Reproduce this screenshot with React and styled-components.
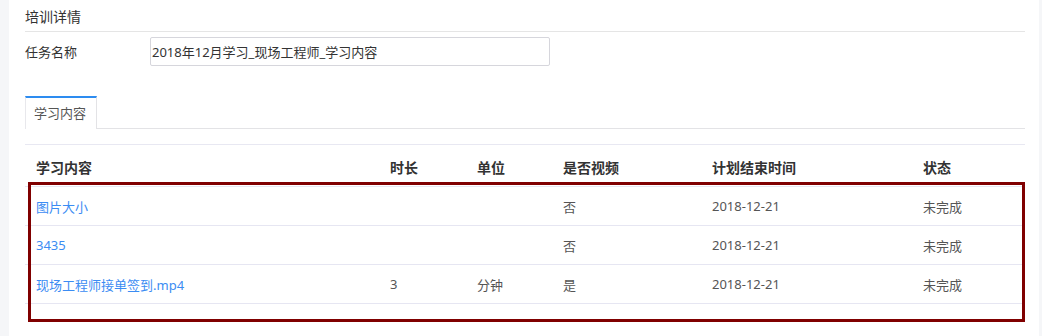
import React from "react";
import styled, { createGlobalStyle } from "styled-components";

const Global = createGlobalStyle`
  html, body { margin: 0; padding: 0; background: #f5f6f8; }
  body { font-family: "Noto Sans", "Noto Sans CJK SC", sans-serif; color: #333; }
  * { box-sizing: border-box; }
`;

const Panel = styled.div`
  margin-left: 9px;
  width: 1030px;
  min-height: 336px;
  background: #fff;
  padding: 0 14px 0 16px;
  position: relative;
`;

const Title = styled.div`
  height: 32px;
  padding-top: 2px;
  line-height: 29px;
  font-size: 14px;
  color: #333;
  border-bottom: 1px solid #e5e5e5;
`;

const FormRow = styled.div`
  display: flex;
  align-items: center;
  margin-top: 5px;
  height: 29px;
`;

const Label = styled.div`
  width: 125px;
  font-size: 13px;
  color: #333;
`;

const Input = styled.div`
  width: 400px;
  height: 29px;
  border: 1px solid #d6d6dc;
  border-radius: 2px;
  padding: 0 1px;
  display: flex;
  align-items: center;
  font-size: 13px;
  color: #333;
`;

const TabBar = styled.div`
  margin-top: 30px;
  display: flex;
  border-bottom: 1px solid #e3e3e6;
`;

const Tab = styled.div`
  height: 33px;
  padding: 0 8px;
  width: 72px;
  font-size: 13px;
  line-height: 31px;
  color: #555;
  border-top: 2px solid #2d8cf0;
  border-left: 1px solid #e8e8ec;
  border-right: 1px solid #e3e3e6;
  background: #fff;
  margin-bottom: -1px;
`;

const Table = styled.div`
  margin-top: 15px;
  border-top: 1px solid #e8e8f2;
  position: relative;
`;

const cols = "354px 87px 86px 149px 211px 113px";

const HeadRow = styled.div`
  display: grid;
  grid-template-columns: ${cols};
  height: 42px;
  align-items: center;
  padding-top: 3px;
  border-bottom: 1px solid #e6e6f2;
`;

const Row = styled.div`
  display: grid;
  grid-template-columns: ${cols};
  height: 39px;
  align-items: center;
  border-bottom: 1px solid #e6e6f2;
`;

const Th = styled.div`
  padding-left: 11px;
  font-size: 14px;
  font-weight: bold;
  color: #333;
`;

const Td = styled.div`
  padding-left: 11px;
  font-size: 13px;
  color: ${(p) => (p.$link ? "#3b8cf3" : "#555")};
`;

const Highlight = styled.div`
  position: absolute;
  left: 3px;
  top: 37px;
  width: 997px;
  height: 140px;
  border: 3px solid #800000;
  pointer-events: none;
`;

const rows = [
  { name: "图片大小", dur: "", unit: "", video: "否", date: "2018-12-21", status: "未完成" },
  { name: "3435", dur: "", unit: "", video: "否", date: "2018-12-21", status: "未完成" },
  { name: "现场工程师接单签到.mp4", dur: "3", unit: "分钟", video: "是", date: "2018-12-21", status: "未完成" },
];

export default function App() {
  return (
    <>
      <Global />
      <Panel>
        <Title>培训详情</Title>
        <FormRow>
          <Label>任务名称</Label>
          <Input>2018年12月学习_现场工程师_学习内容</Input>
        </FormRow>
        <TabBar>
          <Tab>学习内容</Tab>
        </TabBar>
        <Table>
          <HeadRow>
            <Th>学习内容</Th>
            <Th>时长</Th>
            <Th>单位</Th>
            <Th>是否视频</Th>
            <Th>计划结束时间</Th>
            <Th>状态</Th>
          </HeadRow>
          {rows.map((r, i) => (
            <Row key={i}>
              <Td $link>{r.name}</Td>
              <Td>{r.dur}</Td>
              <Td>{r.unit}</Td>
              <Td>{r.video}</Td>
              <Td>{r.date}</Td>
              <Td>{r.status}</Td>
            </Row>
          ))}
          <Highlight />
        </Table>
      </Panel>
    </>
  );
}
